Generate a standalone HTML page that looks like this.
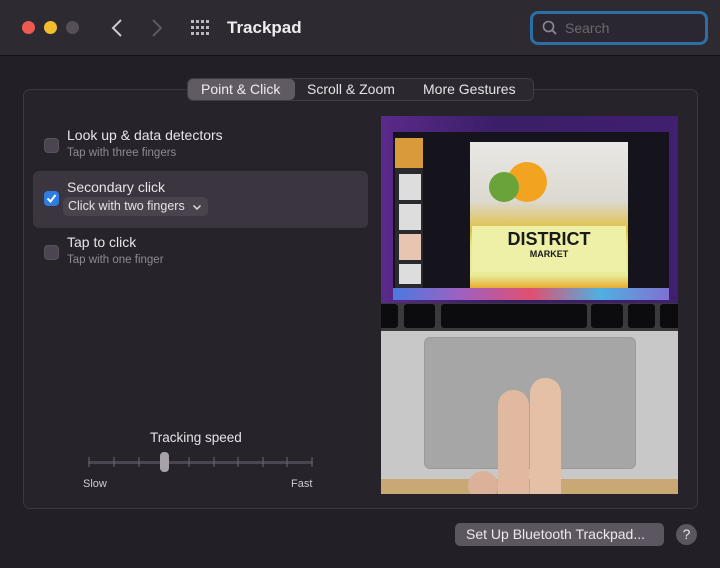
<!DOCTYPE html>
<html><head><style>
*{margin:0;padding:0;box-sizing:border-box}
body{width:720px;height:568px;background:#231f27;font-family:"Liberation Sans",sans-serif;color:#e6e2e8;position:relative;overflow:hidden}
.a{position:absolute}
.tb{left:0;top:0;width:720px;height:56px;background:#2e2a31;border-bottom:1px solid #141116}
.dot{width:13px;height:13px;border-radius:50%;top:21px}
.panel{left:23px;top:89px;width:675px;height:420px;border:1px solid #3b3640;border-radius:7px;background:#27232b}
.cb{width:15px;height:15px;border-radius:4px;background:#4a4550;border:1px solid #57525c}
.t{font-size:14px;color:#e8e4ea}
.s{font-size:11.5px;color:#8f8995}
</style></head><body>
<div class="a tb"></div>
<div class="a dot" style="left:22px;background:#ee5a52"></div>
<div class="a dot" style="left:44px;background:#f4bd2f"></div>
<div class="a dot" style="left:66px;background:#555058"></div>
<svg class="a" style="left:108px;top:18px" width="60" height="20"><path d="M13 2 L5 10 L13 18" stroke="#cfcad2" stroke-width="2" fill="none"/><path d="M45 2 L53 10 L45 18" stroke="#5d5861" stroke-width="2" fill="none"/></svg>
<svg class="a" style="left:191px;top:20px" width="18" height="16"><g fill="#bdb8c0"><rect x="0" y="0" width="3" height="3"/><rect x="5" y="0" width="3" height="3"/><rect x="10" y="0" width="3" height="3"/><rect x="15" y="0" width="3" height="3"/><rect x="0" y="6" width="3" height="3"/><rect x="5" y="6" width="3" height="3"/><rect x="10" y="6" width="3" height="3"/><rect x="15" y="6" width="3" height="3"/><rect x="0" y="12" width="3" height="3"/><rect x="5" y="12" width="3" height="3"/><rect x="10" y="12" width="3" height="3"/><rect x="15" y="12" width="3" height="3"/></g></svg>
<div class="a" style="left:227px;top:18px;font-size:17px;font-weight:bold;color:#f0ecf2">Trackpad</div>
<div class="a" style="left:530px;top:11px;width:178px;height:34px;border:3px solid #2c6fa6;border-radius:8px;background:#2b2730"></div>
<svg class="a" style="left:542px;top:20px" width="16" height="16"><circle cx="6.5" cy="6.5" r="5" stroke="#8e8993" stroke-width="1.6" fill="none"/><path d="M10 10 L14 14" stroke="#8e8993" stroke-width="1.8"/></svg>
<div class="a" style="left:565px;top:20px;font-size:14px;color:#6c6770">Search</div>

<div class="a panel"></div>
<div class="a" style="left:187px;top:78px;width:347px;height:23px;border:1px solid #403b45;border-radius:6px;background:#2c2830"></div>
<div class="a" style="left:188px;top:79px;width:107px;height:21px;border-radius:5px;background:#5f5a63"></div>
<div class="a" style="left:201px;top:81px;font-size:14px;color:#f0ecf2">Point &amp; Click</div>
<div class="a" style="left:307px;top:81px;font-size:14px;color:#e6e2e8">Scroll &amp; Zoom</div>
<div class="a" style="left:423px;top:81px;font-size:14px;color:#e6e2e8">More Gestures</div>

<div class="a cb" style="left:44px;top:138px"></div>
<div class="a t" style="left:67px;top:127px">Look up &amp; data detectors</div>
<div class="a s" style="left:67px;top:147px">Tap with three fingers</div>

<div class="a" style="left:33px;top:171px;width:335px;height:57px;border-radius:6px;background:#3a353e"></div>
<div class="a" style="left:44px;top:191px;width:15px;height:15px;border-radius:4px;background:#2f7ce0"></div>
<svg class="a" style="left:44px;top:191px" width="15" height="15"><path d="M3.5 7.5 L6.5 10.5 L11.5 4" stroke="#fff" stroke-width="2" fill="none"/></svg>
<div class="a t" style="left:67px;top:179px">Secondary click</div>
<div class="a" style="left:63px;top:197px;width:145px;height:19px;border-radius:5px;background:#48434d"></div>
<div class="a" style="left:68px;top:199px;font-size:12.5px;color:#e6e2e8">Click with two fingers</div>
<svg class="a" style="left:192px;top:204px" width="10" height="7"><path d="M1.5 1.5 L5 5 L8.5 1.5" stroke="#ddd" stroke-width="1.5" fill="none"/></svg>

<div class="a cb" style="left:44px;top:245px"></div>
<div class="a t" style="left:67px;top:234px">Tap to click</div>
<div class="a s" style="left:67px;top:254px">Tap with one finger</div>

<div class="a" style="left:150px;top:430px;font-size:13.5px;color:#e6e2e8">Tracking speed</div>
<div class="a" style="left:88px;top:461px;width:225px;height:3px;background:#4a4550;border-radius:2px"></div>
<svg class="a" style="left:88px;top:457px" width="226" height="10"><g stroke="#6b6670" stroke-width="1"><path d="M1 0V10M26 0V10M51 0V10M101 0V10M126 0V10M150 0V10M175 0V10M199 0V10M224 0V10"/></g></svg>
<div class="a" style="left:160px;top:452px;width:9px;height:20px;border-radius:4px;background:#a7a2aa"></div>
<div class="a" style="left:83px;top:478px;font-size:11px;color:#cfcad2">Slow</div>
<div class="a" style="left:291px;top:478px;font-size:11px;color:#cfcad2">Fast</div>

<div class="a" style="left:381px;top:116px;width:297px;height:378px;overflow:hidden;background:#cfcfcf">
 <div class="a" style="left:0;top:0;width:297px;height:187px;background:linear-gradient(90deg,#5a2a8a,#3a1e66 40%,#401f70)"></div>
 <div class="a" style="left:12px;top:16px;width:276px;height:160px;background:#15141c"></div>
 <div class="a" style="left:14px;top:22px;width:28px;height:150px;background:#2a2a2e"></div>
 <div class="a" style="left:14px;top:22px;width:28px;height:30px;background:#d99a3a"></div>
 <div class="a" style="left:18px;top:58px;width:22px;height:26px;background:#ddd"></div>
 <div class="a" style="left:18px;top:88px;width:22px;height:26px;background:#ddd"></div>
 <div class="a" style="left:18px;top:118px;width:22px;height:26px;background:#e7c5b0"></div>
 <div class="a" style="left:18px;top:148px;width:22px;height:20px;background:#ddd"></div>
 <div class="a" style="left:89px;top:26px;width:158px;height:148px;background:linear-gradient(#e9e8e4,#dcd9d0 40%,#e0c040 60%,#e8e890 70%,#e8ec98 90%,#e8a020)"></div>
 <div class="a" style="left:126px;top:46px;width:40px;height:40px;border-radius:50%;background:#f2a420"></div>
 <div class="a" style="left:108px;top:56px;width:30px;height:30px;border-radius:50%;background:#6aa33a"></div>
 <div class="a" style="left:91px;top:110px;width:154px;height:46px;background:#eff0a8"></div>
 <div class="a" style="left:91px;top:113px;width:154px;text-align:center;font-size:18px;font-weight:bold;color:#1a1a1a">DISTRICT</div>
 <div class="a" style="left:91px;top:133px;width:154px;text-align:center;font-size:9px;font-weight:bold;color:#1a1a1a">MARKET</div>
 <div class="a" style="left:12px;top:172px;width:276px;height:12px;background:linear-gradient(90deg,#4a7ae0,#a060c0,#e05070,#50b0e0,#8070d0)"></div>
 <div class="a" style="left:0;top:187px;width:297px;height:28px;background:#3a3a3c"></div>
 <div class="a" style="left:-4px;top:188px;width:21px;height:24px;background:#0c0c0e;border-radius:3px"></div>
 <div class="a" style="left:23px;top:188px;width:31px;height:24px;background:#0c0c0e;border-radius:3px"></div>
 <div class="a" style="left:60px;top:188px;width:146px;height:24px;background:#0c0c0e;border-radius:3px"></div>
 <div class="a" style="left:210px;top:188px;width:32px;height:24px;background:#0c0c0e;border-radius:3px"></div>
 <div class="a" style="left:247px;top:188px;width:27px;height:24px;background:#0c0c0e;border-radius:3px"></div>
 <div class="a" style="left:279px;top:188px;width:25px;height:24px;background:#0c0c0e;border-radius:3px"></div>
 <div class="a" style="left:0;top:215px;width:297px;height:148px;background:#c8c8c8"></div>
 <div class="a" style="left:43px;top:221px;width:212px;height:132px;border-radius:6px;background:#a6a6a6;border:1px solid #9a9a9a"></div>
 <div class="a" style="left:0;top:363px;width:297px;height:15px;background:#c9a874"></div>
 <div class="a" style="left:117px;top:274px;width:31px;height:120px;border-radius:15px;background:#e1b9a0"></div>
 <div class="a" style="left:149px;top:262px;width:31px;height:130px;border-radius:15px;background:#e6c0a6"></div>
 <div class="a" style="left:87px;top:355px;width:30px;height:30px;border-radius:15px;background:#dcb199"></div>
</div>

<div class="a" style="left:455px;top:523px;width:209px;height:23px;border-radius:5px;background:#5b565f"></div>
<div class="a" style="left:466px;top:526px;font-size:14px;color:#ece8ee">Set Up Bluetooth Trackpad...</div>
<div class="a" style="left:676px;top:524px;width:21px;height:21px;border-radius:50%;background:#5b565f;text-align:center;font-size:14px;line-height:21px;color:#ece8ee">?</div>
</body></html>
